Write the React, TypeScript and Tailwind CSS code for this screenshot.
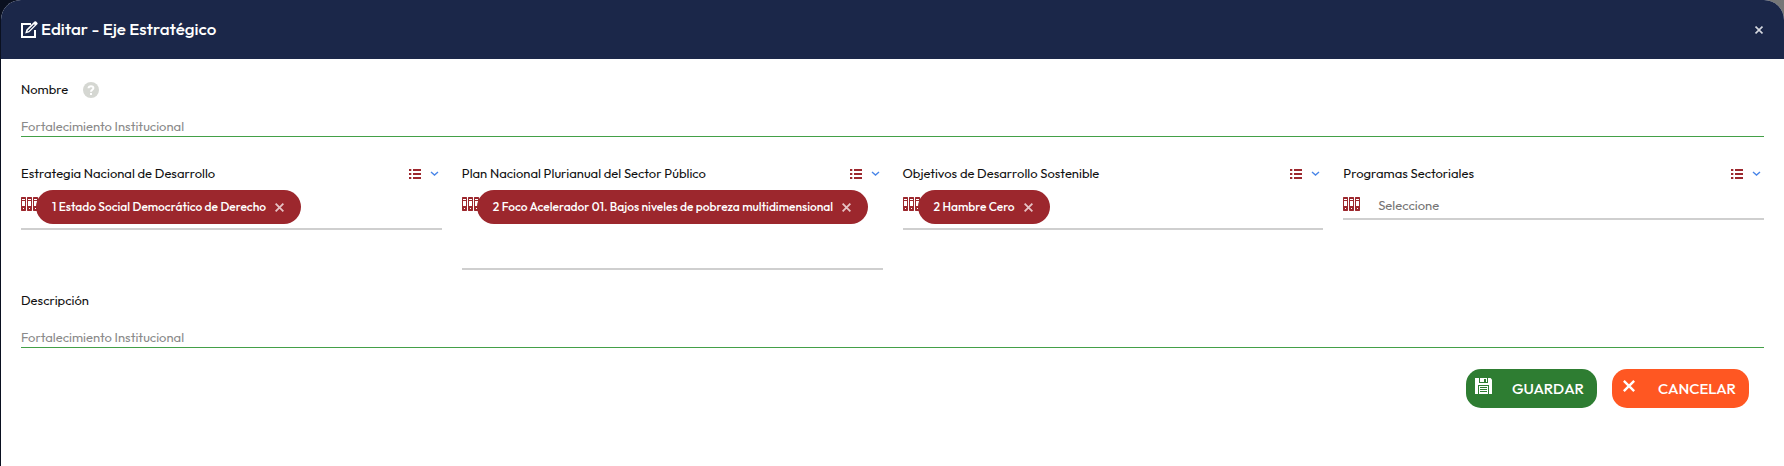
import { useId } from "react";

const BinderIcon = () => (
  <svg viewBox="0 0 18 14" className="h-[14px] w-[18px] shrink-0" fill="#9c272d" aria-hidden="true">
    {[0, 6, 12].map((x) => (
      <path
        key={x}
        transform={`translate(${x} 0)`}
        fillRule="evenodd"
        d="M.5 0h4l.5.5v13l-.5.5h-4L0 13.500V.5zM1 2v1h3V2zM1 4v5h3V4zM2 11v1h1v-1z"
      />
    ))}
  </svg>
);

const ListIcon = () => (
  <svg viewBox="0 0 12 10" className="h-[10px] w-[12px]" fill="#9c272d" aria-hidden="true">
    {[0, 4, 8].map((y) => (
      <g key={y}>
        <rect x="0" y={y} width="2.300" height="2" />
        <rect x="4" y={y} width="8" height="2" />
      </g>
    ))}
  </svg>
);

const ChevronIcon = () => (
  <svg viewBox="0 0 9 6" className="h-[6px] w-[9px]" fill="none" stroke="#4a86e8" strokeWidth="1.400" aria-hidden="true">
    <path d="M1 1l3.500 3L8 1" />
  </svg>
);

const CrossIcon = ({ className }: { className: string }) => (
  <svg viewBox="0 0 10 10" className={className} fill="none" stroke="currentColor" strokeWidth="2" aria-hidden="true">
    <path d="M.700.700l8.600 8.600M9.300.700L.700 9.300" />
  </svg>
);

const EditIcon = () => (
  <svg viewBox="0 0 17 17" className="h-[17px] w-[17px]" aria-hidden="true">
    <path d="M10 3H1v13h13V9" fill="none" stroke="#fff" strokeWidth="2" />
    <path
      fillRule="evenodd"
      fill="#fff"
      d="M13.500.500a1.200 1.200 0 0 1 1.600 0l1.200 1.200a1.200 1.200 0 0 1 0 1.600L8.300 11.300l-4.100 1.300L5.400 8.500zM6.900 9.200l-.4 1.200 1.200-.4 6.100-6-.8-.8z"
    />
  </svg>
);

const SaveIcon = () => (
  <svg viewBox="0 0 17 16" className="h-[16px] w-[17px]" aria-hidden="true">
    <path fill="#fff" d="M0 0h15.500L17 1.500V16H0z" />
    <path fill="#2e7d32" d="M4 0h1v4h7V0h1v5H4zM9 1h2v3H9z" />
    <path fill="#2e7d32" d="M3 7h11v9h-1V8H4v8H3zM5 9h7v1H5zM5 11h7v1H5zM5 13h7v1H5z" />
  </svg>
);

function TextField({ label, help, value }: { label: string; help?: boolean; value: string }) {
  const id = useId();
  return (
    <div>
      <div className="flex h-4 items-center gap-[15px]">
        <label htmlFor={id} className="pb-[2px]">
          {label}
        </label>
        {help && (
          <button
            type="button"
            aria-label="Ayuda"
            className="flex size-4 items-center justify-center rounded-full bg-[#d5d7d2] text-white"
          >
            <svg viewBox="0 0 8 10" className="h-[10px] w-2" fill="none" stroke="currentColor" strokeWidth="2" aria-hidden="true">
              <path d="M1.500 3.200C1.700.500 6.400.500 6.400 3 6.400 4.800 4 4.600 4 6.800" />
              <path d="M3 8h2v2H3z" fill="currentColor" stroke="none" />
            </svg>
          </button>
        )}
      </div>
      <input
        id={id}
        defaultValue={value}
        className="mt-5 block h-[19px] w-full border-b border-[#43a047] pb-[2px] text-[#8a8a8a] outline-none"
      />
    </div>
  );
}

function TagField({ label, tag }: { label: string; tag?: string }) {
  const id = useId();
  return (
    <div>
      <div className="flex h-4 items-center justify-between pr-[3px]">
        <label htmlFor={id} className="pb-[2px]">
          {label}
        </label>
        <button type="button" aria-label={`Opciones de ${label}`} className="flex items-center gap-[9px]">
          <ListIcon />
          <ChevronIcon />
        </button>
      </div>
      <div className="mt-2 flex items-start border-b-2 border-[#cfcfcf] pb-1">
        <span className="mt-[7px] shrink-0">
          <BinderIcon />
        </span>
        {tag ? (
          <div className="-ml-[3px] flex min-w-0 flex-1 flex-wrap gap-y-[6px]">
            <span className="flex h-[34px] items-center gap-[9px] rounded-full bg-[#9c272d] pr-[17px] pl-4 text-[12px] font-medium whitespace-nowrap text-white">
              {tag}
              <button type="button" aria-label={`Quitar ${tag}`} className="text-[#e6c3c5]">
                <CrossIcon className="size-[9px]" />
              </button>
            </span>
            <input id={id} className="h-[34px] w-[100px] outline-none" />
          </div>
        ) : (
          <input
            id={id}
            placeholder="Seleccione"
            className="ml-[17px] h-6 min-w-0 flex-1 pt-[6px] outline-none placeholder:text-[#757575]"
          />
        )}
      </div>
    </div>
  );
}

export default function App() {
  return (
    <div className="min-h-screen bg-[linear-gradient(90deg,#0a1020,#0a1020_50%,#777)] pl-px font-['Outfit','Lato',sans-serif] text-[13px] leading-4 text-[#111]">
      <div role="dialog" aria-labelledby="title" className="min-h-screen overflow-hidden rounded-t-[20px] bg-white">
        <header className="flex h-[59px] items-center justify-between bg-[#1b2749] pr-[21px] pl-5 text-white">
          <h1 id="title" className="flex items-center gap-[3px] pb-[2px] text-[17px] leading-6 font-medium">
            <span className="pt-[2px]">
              <EditIcon />
            </span>
            Editar - Eje Estratégico
          </h1>
          <button type="button" aria-label="Cerrar" className="text-[#d5d8df]">
            <CrossIcon className="size-2" />
          </button>
        </header>
        <form className="px-5 pt-[23px]" onSubmit={(e) => e.preventDefault()}>
          <TextField label="Nombre" help value="Fortalecimiento Institucional" />
          <div className="mt-[29px] grid grid-cols-4 items-start gap-5">
            <TagField label="Estrategia Nacional de Desarrollo" tag="1 Estado Social Democrático de Derecho" />
            <TagField
              label="Plan Nacional Plurianual del Sector Público"
              tag="2 Foco Acelerador 01. Bajos niveles de pobreza multidimensional"
            />
            <TagField label="Objetivos de Desarrollo Sostenible" tag="2 Hambre Cero" />
            <TagField label="Programas Sectoriales" />
          </div>
          <div className="mt-[23px]">
            <TextField label="Descripción" value="Fortalecimiento Institucional" />
          </div>
          <div className="mt-[21px] flex justify-end gap-[15px] pr-[15px] text-[15px] font-medium text-white">
            <button type="submit" className="flex h-[39px] w-[131px] items-center justify-between rounded-[15px] bg-[#2e7d32] pr-[13px] pl-[9px]">
              <span className="mb-[5px]">
                <SaveIcon />
              </span>
              GUARDAR
            </button>
            <button type="button" className="flex h-[39px] w-[137px] items-center justify-between rounded-[15px] bg-[#ff5722] pr-[13px] pl-[11px]">
              <span className="mb-[5px]">
                <CrossIcon className="size-3" />
              </span>
              CANCELAR
            </button>
          </div>
        </form>
      </div>
    </div>
  );
}
